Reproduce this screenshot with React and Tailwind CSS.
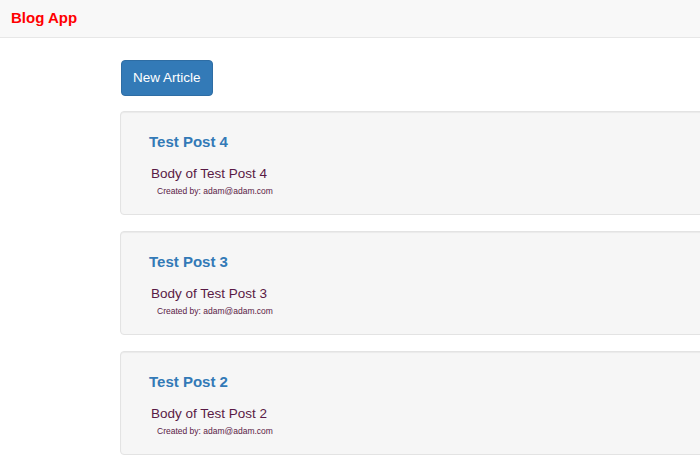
const POSTS = [
  { id: 4, title: 'Test Post 4', body: 'Body of Test Post 4', author: 'adam@adam.com' },
  { id: 3, title: 'Test Post 3', body: 'Body of Test Post 3', author: 'adam@adam.com' },
  { id: 2, title: 'Test Post 2', body: 'Body of Test Post 2', author: 'adam@adam.com' },
]

export default function App() {
  return (
    <div className="w-[700px] h-[467px] overflow-hidden bg-white font-['Liberation_Sans',Arial,sans-serif]">
      {/* Navbar */}
      <div className="h-[38px] bg-[#f8f8f8] border-b border-[#e7e7e7] flex items-center px-[11px]">
        <span className="text-[15px] font-bold text-[#ff0000]">Blog App</span>
      </div>

      <div className="pl-[120px] pt-[22px]">
        <button className="ml-px h-[36px] px-[11px] rounded-[4px] bg-[#337ab7] border border-[#2e6da4] text-white text-[13.5px]">
          New Article
        </button>

        <div className="mt-[15px] flex flex-col gap-[16px]">
          {POSTS.map(p => (
            <div
              key={p.id}
              className="w-[640px] h-[104px] bg-[#f6f6f6] border border-[#e3e3e3] rounded-[4px] shadow-[inset_0_1px_1px_rgba(0,0,0,0.05)] pl-[28px] pt-[20px]"
            >
              <h2 className="text-[15px] font-bold text-[#337ab7] leading-[20px]">{p.title}</h2>
              <p className="mt-[14px] ml-[2px] text-[13.5px] text-[#5a1a45] leading-[16px]">{p.body}</p>
              <p className="mt-[3px] ml-[8px] text-[8.5px] text-[#5a1a45] leading-[12px]">Created by: {p.author}</p>
            </div>
          ))}
        </div>
      </div>
    </div>
  )
}
